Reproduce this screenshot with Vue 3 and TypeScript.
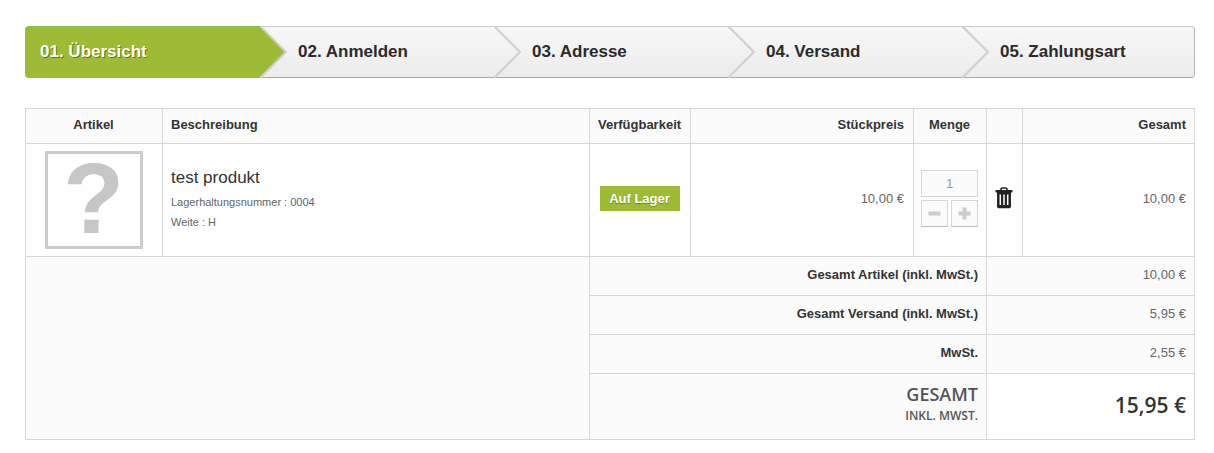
<template>
  <div class="cart">
    <ol class="steps">
      <li v-for="(step, i) in steps" :key="step" class="step" :class="{ active: i === 0 }">
        <span class="step-label">{{ step }}</span>
        <svg v-if="i < steps.length - 1" class="step-arrow" width="28" height="52" viewBox="0 0 28 52">
          <defs>
            <linearGradient :id="`arrow-${i}`" x1="0" y1="0" x2="0" y2="1">
              <stop offset="0" stop-color="#f7f7f7" />
              <stop offset="1" stop-color="#ececec" />
            </linearGradient>
          </defs>
          <path class="arrow-fill" d="M0 0L26 26L0 52Z" :fill="i === 0 ? '#9dbb34' : `url(#arrow-${i})`" />
          <path class="arrow-line" d="M0 0L26 26L0 52" />
        </svg>
      </li>
    </ol>

    <table class="summary">
      <colgroup>
        <col style="width: 137px" />
        <col style="width: 427px" />
        <col style="width: 101px" />
        <col style="width: 223px" />
        <col style="width: 73px" />
        <col style="width: 36px" />
        <col style="width: 172px" />
      </colgroup>
      <thead>
        <tr>
          <th class="center">Artikel</th>
          <th class="left">Beschreibung</th>
          <th class="center">Verfügbarkeit</th>
          <th class="right">Stückpreis</th>
          <th class="center">Menge</th>
          <th></th>
          <th class="right">Gesamt</th>
        </tr>
      </thead>
      <tbody>
        <tr class="product">
          <td class="center thumb-cell">
            <div class="thumb"><span>?</span></div>
          </td>
          <td class="left">
            <div class="name">test produkt</div>
            <div class="meta">Lagerhaltungsnummer : <span class="sku">0004</span></div>
            <div class="meta">Weite : H</div>
          </td>
          <td class="center"><span class="badge">Auf Lager</span></td>
          <td class="right price">10,00 €</td>
          <td class="center raised">
            <div class="qty">
              <div class="qty-value">1</div>
              <button class="qty-btn" type="button">
                <svg width="13" height="13" viewBox="0 0 13 13"><rect x="0.5" y="4.5" width="12" height="4" /></svg>
              </button>
              <button class="qty-btn" type="button">
                <svg width="13" height="13" viewBox="0 0 13 13"><path d="M4.5 0.5h4v4h4v4h-4v4h-4v-4h-4v-4h4z" /></svg>
              </button>
            </div>
          </td>
          <td class="center raised">
            <svg class="trash" width="18" height="22" viewBox="0 0 18 22">
              <path d="M6 3.500V2.400C6 1.600 6.600 1 7.400 1h3.200c.8 0 1.400.6 1.400 1.400v1.100" fill="none" stroke="#222" stroke-width="1.600" />
              <rect x="0.500" y="3" width="17" height="2.400" rx="0.600" fill="#222" />
              <path d="M2 5h14v14.200c0 1.200-.9 2.100-2 2.100H4c-1.100 0-2-.9-2-2.100z" fill="#222" />
              <path d="M5.300 7.500v10.500M9 7.500v10.500M12.700 7.500v10.500" stroke="#fff" stroke-width="1.500" />
            </svg>
          </td>
          <td class="right price">10,00 €</td>
        </tr>
        <tr v-for="(row, i) in totals" :key="row.label" class="total-row">
          <td v-if="i === 0" colspan="2" :rowspan="totals.length + 1"></td>
          <td colspan="3" class="right total-label">{{ row.label }}</td>
          <td colspan="2" class="right price">{{ row.value }}</td>
        </tr>
        <tr class="grand-row">
          <td colspan="3" class="right grand-label">
            <div class="grand-title">GESAMT</div>
            <div class="grand-sub">INKL. MWST.</div>
          </td>
          <td colspan="2" class="right grand-value">15,95 €</td>
        </tr>
      </tbody>
    </table>
  </div>
</template>

<script setup lang="ts">
const steps: string[] = ['01. Übersicht', '02. Anmelden', '03. Adresse', '04. Versand', '05. Zahlungsart']

const totals = [
  { label: 'Gesamt Artikel (inkl. MwSt.)', value: '10,00 €' },
  { label: 'Gesamt Versand (inkl. MwSt.)', value: '5,95 €' },
  { label: 'MwSt.', value: '2,55 €' }
]
</script>

<style scoped>
.cart {
  width: 1170px;
  padding: 26px 0 0 25px;
  font-family: "Liberation Sans", Arial, sans-serif;
  color: #333;
}

.steps {
  display: grid;
  grid-template-columns: 235px 234px 234px 234px 233px;
  height: 52px;
  margin: 0 0 30px;
  padding: 0;
  list-style: none;
  box-sizing: border-box;
}

.step {
  position: relative;
  display: flex;
  align-items: center;
  padding-left: 38px;
  box-sizing: border-box;
  border-top: 1px solid #ccc;
  border-bottom: 1px solid #aaa;
  background: linear-gradient(#f7f7f7, #ececec);
  font-size: 17px;
  font-weight: bold;
  color: #2b2b2b;
}

.step:first-child {
  padding-left: 15px;
  border-radius: 4px 0 0 4px;
}

.step:last-child {
  border-right: 1px solid #bbb;
  border-radius: 0 4px 4px 0;
}

.step.active {
  border-color: #8cc152;
  border-right: 0;
  background: #9dbb34;
  color: #fff;
  text-shadow: 1px 1px 0 #5f7a12;
}

.step-arrow {
  position: absolute;
  z-index: 1;
  top: -1px;
  left: 100%;
}

.arrow-line {
  fill: none;
  stroke: #cfcfcf;
  stroke-width: 2;
}

.summary {
  width: 1169px;
  table-layout: fixed;
  border-collapse: collapse;
  font-size: 13px;
}

.summary th,
.summary td {
  padding: 0 9px 4px 8px;
  border: 1px solid #d6d6d6;
  background: #fbfbfb;
}

.summary th:last-child,
.summary td:last-child {
  padding-right: 8px;
}

.summary th {
  height: 30px;
  font-size: 13px;
  font-weight: bold;
  color: #333;
}

.center {
  text-align: center;
}

.left {
  text-align: left;
}

.right {
  text-align: right;
}

.product {
  height: 113px;
}

.summary .product td {
  background: #fff;
}

.summary .product td.thumb-cell {
  padding-bottom: 0;
}

.thumb {
  display: flex;
  align-items: center;
  justify-content: center;
  width: 98px;
  height: 98px;
  margin: 0 auto;
  padding-bottom: 4px;
  box-sizing: border-box;
  border: 3px solid #ccc;
  font-size: 100px;
  font-weight: bold;
  line-height: 88px;
  color: #c6c6c6;
}

.name {
  margin-bottom: 5px;
  font-size: 17px;
  line-height: 22px;
  color: #333;
}

.meta {
  margin-top: 6px;
  font-size: 11px;
  line-height: 14px;
  color: #666;
}

.sku {
  color: #4a6785;
}

.badge {
  display: block;
  width: 80px;
  height: 25px;
  margin: 0 auto;
  background: #9dbb34;
  font-size: 13px;
  font-weight: bold;
  line-height: 25px;
  color: #fff;
  text-shadow: 0 1px 1px #6d8a17;
}

.price {
  color: #666;
}

.qty {
  display: grid;
  grid-template-columns: 27px 27px;
  gap: 3px;
  justify-content: center;
}

.qty-value {
  grid-column: span 2;
  height: 27px;
  box-sizing: border-box;
  border: 1px solid #d6d6d6;
  background: #fbfbfb;
  line-height: 25px;
  color: #999;
}

.qty-btn {
  display: flex;
  align-items: center;
  justify-content: center;
  height: 27px;
  padding: 0;
  border: 1px solid #d6d6d6;
  border-bottom-color: #bbb;
  background: #fbfbfb;
}

.qty-btn svg {
  fill: #ccc;
}

.trash {
  display: block;
  margin: 0 auto;
}

.total-row {
  height: 39px;
}

.summary .total-label,
.summary .grand-label {
  padding-right: 8px;
}

.total-label {
  font-weight: bold;
  color: #333;
}

.grand-row {
  height: 66px;
}

.summary .grand-label {
  padding-bottom: 8px;
}

.grand-title {
  font-family: "Open Sans", sans-serif;
  font-size: 18px;
  font-weight: 600;
  line-height: 24px;
  color: #555;
}

.grand-sub {
  margin-top: 2px;
  font-family: "Open Sans", sans-serif;
  font-size: 12px;
  font-weight: 600;
  line-height: 16px;
  color: #555;
}

.summary .grand-value {
  padding-bottom: 4px;
  background: #fff;
  font-family: "Open Sans", sans-serif;
  font-size: 21px;
  font-weight: 600;
  color: #333;
}
</style>
